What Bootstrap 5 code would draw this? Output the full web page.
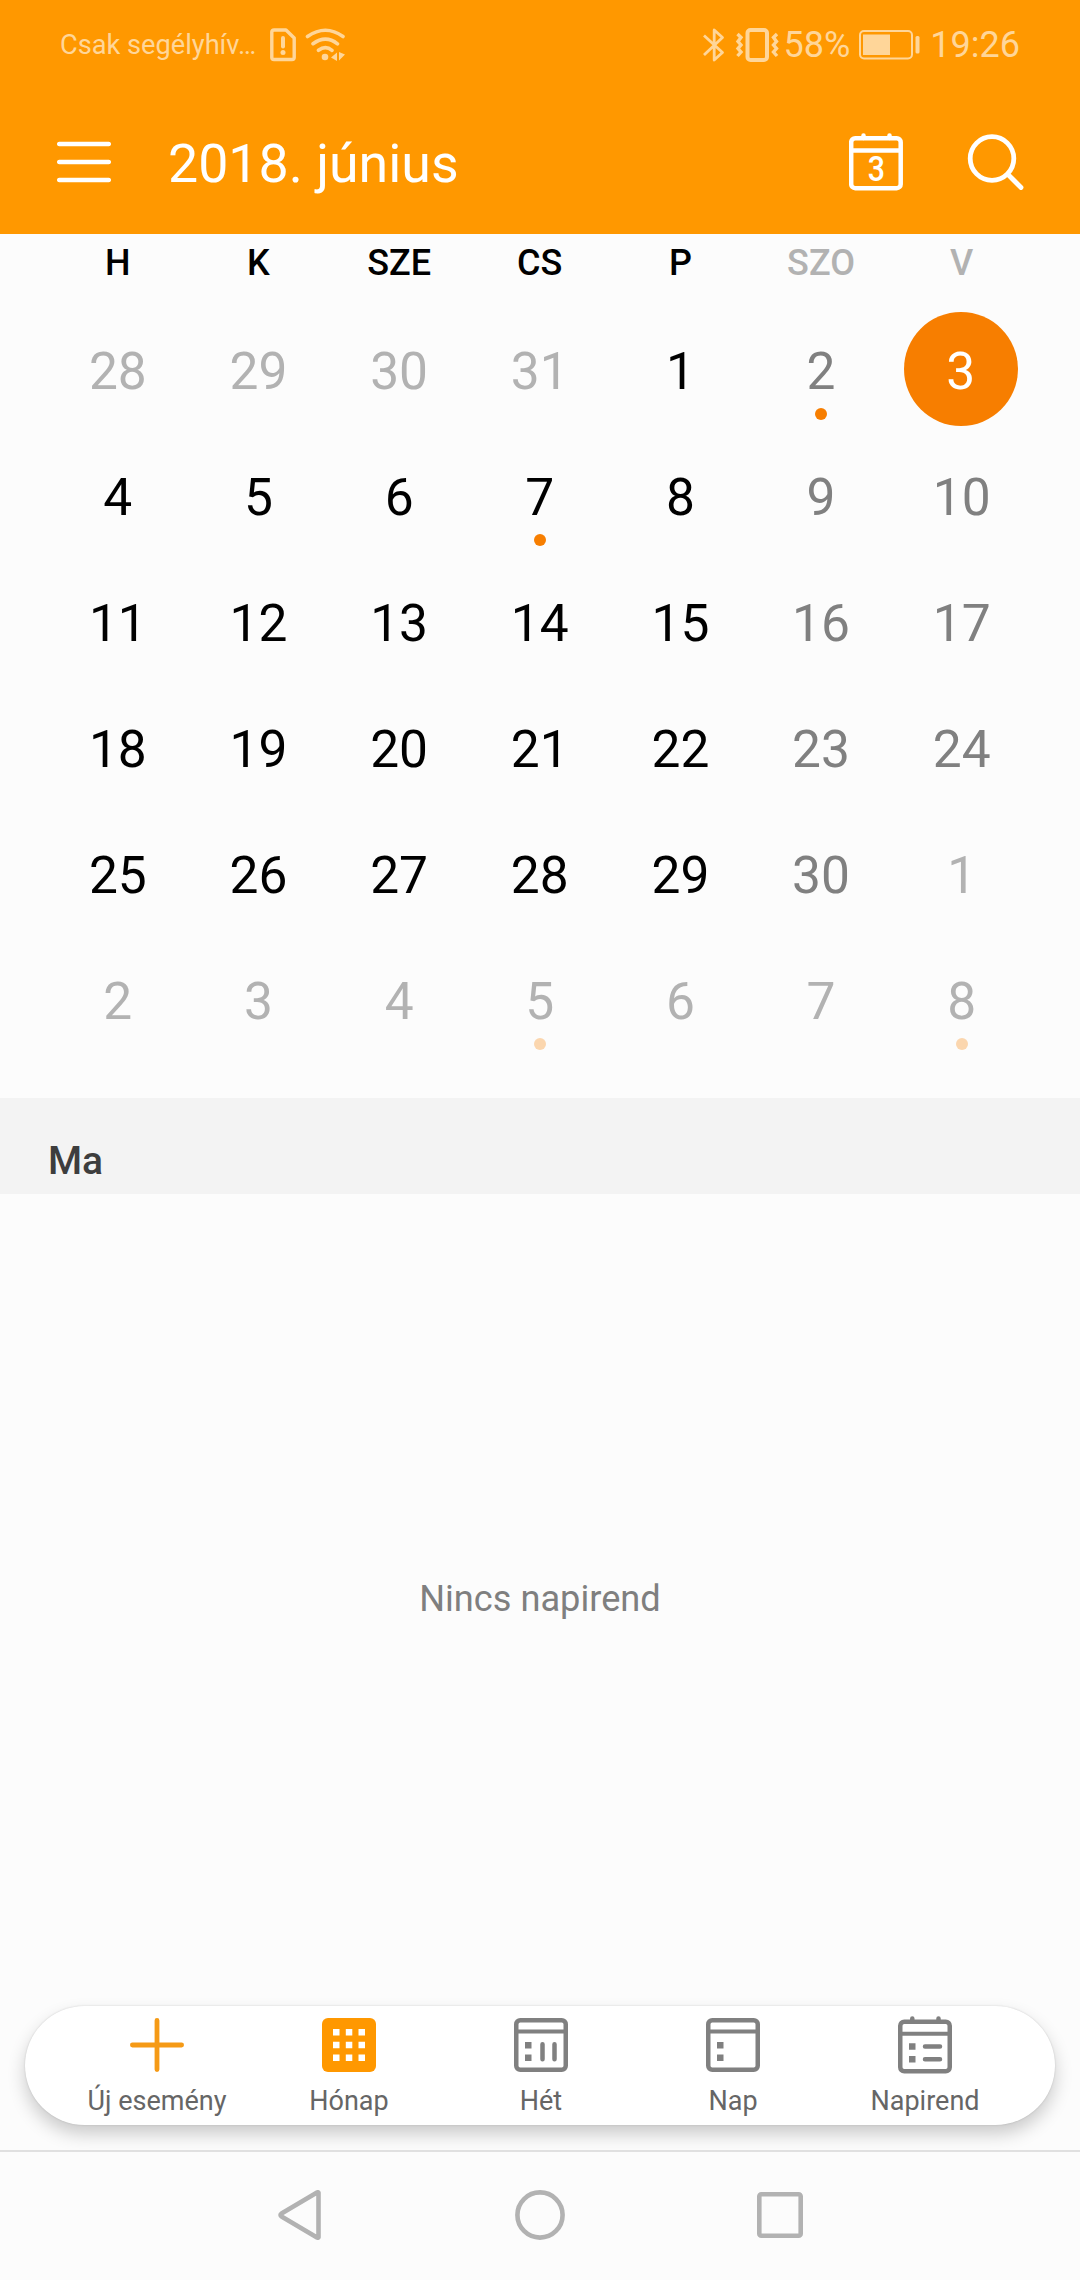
<!DOCTYPE html>
<html lang="hu">
<head>
<meta charset="utf-8">
<meta name="viewport" content="width=device-width, initial-scale=1">
<title>Naptár</title>
<link rel="stylesheet" href="https://cdn.jsdelivr.net/npm/bootstrap@5.3.0/dist/css/bootstrap.min.css">
<style>
  body { font-family: Roboto, "Noto Sans", sans-serif; background: #fcfcfc; color: #000; width: 1080px; height: 2280px; overflow: hidden; }
  svg { display: block; flex: none; }
  .top-area { background: #ff9800; height: 234px; }
  .status-bar { height: 90px; padding: 0 60px; color: #ffd699; line-height: 92px; white-space: nowrap; }
  .carrier { font-size: 27.2px; width: 210px; }
  .status-num { font-size: 36px; line-height: 94px; }
  .vibrate-icon { margin-left: 9px; }
  .battery-pct { margin-left: 5px; }
  .battery-icon { margin-left: 9px; }
  .clock { margin-left: 10px; }
  .app-bar { height: 144px; padding: 0 56px 0 57px; color: #fff; }
  .app-title { font-size: 53.7px; line-height: 60px; font-weight: 400; margin: 4px 0 0 57px; }
  .search-icon { margin-left: 64px; }
  .cal { padding: 0 48px 0 47.500px; height: 864px; }
  .weekdays { height: 72px; font-size: 36px; line-height: 59px; font-weight: 500; }
  .day { height: 126px; font-size: 51.5px; line-height: 131px; }
  .weekend { color: #808080; }
  .faded { color: #b2b2b2; }
  .today-disc { width: 114px; height: 114px; margin: 6px 0 0 12.500px; line-height: 119px; background: #f77e00; color: #fff; }
  .event-dot { width: 12px; height: 12px; left: calc(50% - 6px); top: 102px; background: #f77e00; }
  .faded .event-dot { background: #fbd6ae; }
  .section-head { height: 96px; background: #f3f3f3; padding: 33px 0 0 48px; font-size: 39px; line-height: 61px; font-weight: 500; color: #3d3d3d; }
  .agenda { height: 812px; font-size: 36.2px; color: #7f7f7f; padding-bottom: 2px; }
  .tab-bar { height: 119px; margin: 0 25px; padding: 12px 34px 0 36px; border-radius: 60px; background: #fff; box-shadow: 0 9px 18px rgba(0,0,0,.2), 0 0 2px rgba(0,0,0,.16); }
  .tab-item { font-size: 27px; line-height: 32px; color: #666; gap: 13px; }
  .nav-area { margin-top: 25px; height: 130px; border-top: 2px solid #e0e0e0; padding-bottom: 2px; }
  .home-icon { margin: 0 192px 0 193px; }
</style>
<script src="https://cdn.jsdelivr.net/npm/bootstrap@5.3.0/dist/js/bootstrap.bundle.min.js"></script>
</head>
<body>
<header class="top-area">
  <div class="status-bar d-flex align-items-center">
    <span class="carrier">Csak segélyhív…</span>
    <svg width="26" height="34" viewBox="0 0 26 34" fill="none" stroke="#ffd699" stroke-width="3.400"><path d="M4 2H16L24.200 10V29.500Q24.200 31.500 22 31.500H4Q1.800 31.500 1.800 29.500V4Q1.800 2 4 2Z" stroke-linejoin="round"/><path d="M13 10V18.500" stroke-width="4" stroke-linecap="round"/><circle cx="13" cy="24.600" r="2.500" fill="#ffd699" stroke="none"/></svg>
    <svg class="ms-2" width="42" height="34" viewBox="0 0 42 34" fill="none" stroke="#ffd699" stroke-width="3.600" stroke-linecap="round"><path d="M3.500 8.500Q21.500-4 39 8.500M9 15.800Q21.500 6.500 33.500 15.800M14.500 22.300Q21.500 17 28 22.300"/><circle cx="21" cy="29" r="3.300" fill="#ffd699" stroke="none"/><path d="M27 29.500L33 24.500V33ZM35 24L41 26.500L35 32.500Z" fill="#ffd699" stroke="none"/></svg>
    <div class="d-flex align-items-center ms-auto">
      <svg width="24" height="36" viewBox="0 0 24 36" fill="none" stroke="#ffd699" stroke-width="2.800" stroke-linejoin="round"><path d="M2 8.500L20.500 25.500L12.200 33V3L20.500 10.500L2 28"/></svg>
      <svg class="vibrate-icon" width="44" height="34" viewBox="0 0 44 34" fill="none" stroke="#ffd699"><rect x="12.500" y="2" width="19.500" height="30" rx="3" stroke-width="4"/><path d="M2.500 6L6 9.500L3 13.500L6 17L3 20.500L6 24L2.500 28M42 6L38.500 9.500L41.500 13.500L38.500 17L41.500 20.500L38.500 24L42 28" stroke-width="3.400"/></svg>
      <span class="status-num battery-pct">58%</span>
      <svg class="battery-icon" width="61" height="30" viewBox="0 0 61 30"><rect x="1" y="1" width="52" height="27.500" rx="4" fill="none" stroke="#ffd699" stroke-width="2"/><rect x="4" y="4.500" width="27" height="20.500" fill="#ffd699"/><rect x="56.500" y="6" width="4" height="17.500" rx="1.500" fill="#ffd699"/></svg>
      <span class="status-num clock">19:26</span>
    </div>
  </div>
  <div class="app-bar d-flex align-items-center">
    <svg width="54" height="42" viewBox="0 0 54 42" stroke="#fff" stroke-width="4.500" stroke-linecap="round"><path d="M2.200 3H51.800M2.200 21H51.800M2.200 39H51.800"/></svg>
    <h1 class="app-title mb-0">2018. június</h1>
    <svg class="ms-auto" width="54" height="58" viewBox="0 0 54 58" fill="none" stroke="#fff" stroke-width="4.500"><rect x="2.200" y="5.200" width="49.500" height="50" rx="4"/><path d="M2 17.500H52"/><path d="M14.500 5V2.500M40.500 5V2.500" stroke-linecap="round"/><text transform="translate(27.500 48) scale(.88 1)" text-anchor="middle" font-size="34.500" font-weight="500" fill="#fff" stroke="none">3</text></svg>
    <svg class="search-icon" width="57" height="58" viewBox="0 0 57 58" fill="none" stroke="#fff" stroke-width="4.800" stroke-linecap="round"><circle cx="25" cy="25.500" r="21.800"/><path d="M41 41.500L54 54.500"/></svg>
  </div>
</header>
<main>
  <section class="cal text-center">
    <div class="weekdays row g-0"><div class="col">H</div><div class="col">K</div><div class="col">SZE</div><div class="col">CS</div><div class="col">P</div><div class="col faded">SZO</div><div class="col faded">V</div></div>
    <div class="row g-0"><div class="col day faded">28</div><div class="col day faded">29</div><div class="col day faded">30</div><div class="col day faded">31</div><div class="col day">1</div><div class="col day weekend position-relative">2<span class="event-dot position-absolute rounded-circle"></span></div><div class="col day"><div class="today-disc rounded-circle">3</div></div></div>
    <div class="row g-0"><div class="col day">4</div><div class="col day">5</div><div class="col day">6</div><div class="col day position-relative">7<span class="event-dot position-absolute rounded-circle"></span></div><div class="col day">8</div><div class="col day weekend">9</div><div class="col day weekend">10</div></div>
    <div class="row g-0"><div class="col day">11</div><div class="col day">12</div><div class="col day">13</div><div class="col day">14</div><div class="col day">15</div><div class="col day weekend">16</div><div class="col day weekend">17</div></div>
    <div class="row g-0"><div class="col day">18</div><div class="col day">19</div><div class="col day">20</div><div class="col day">21</div><div class="col day">22</div><div class="col day weekend">23</div><div class="col day weekend">24</div></div>
    <div class="row g-0"><div class="col day">25</div><div class="col day">26</div><div class="col day">27</div><div class="col day">28</div><div class="col day">29</div><div class="col day weekend">30</div><div class="col day faded">1</div></div>
    <div class="row g-0"><div class="col day faded">2</div><div class="col day faded">3</div><div class="col day faded">4</div><div class="col day faded position-relative">5<span class="event-dot position-absolute rounded-circle"></span></div><div class="col day faded">6</div><div class="col day faded">7</div><div class="col day faded position-relative">8<span class="event-dot position-absolute rounded-circle"></span></div></div>
  </section>
  <h2 class="section-head mb-0">Ma</h2>
  <div class="agenda d-flex align-items-center justify-content-center">Nincs napirend</div>
</main>
<nav class="tab-bar d-flex">
  <div class="tab-item col d-flex flex-column align-items-center">
    <svg width="54" height="54" viewBox="0 0 54 54" stroke="#f59a16" stroke-width="4.800" stroke-linecap="round"><path d="M27 2.400V51.600M2.400 27H51.600"/></svg>Új esemény</div>
  <div class="tab-item col d-flex flex-column align-items-center">
    <svg width="54" height="54" viewBox="0 0 54 54"><rect width="54" height="54" rx="6" fill="#ff9800"/><path d="M11 11h6.500v6.500H11zM23.800 11h6.500v6.500h-6.500zM36.500 11H43v6.500h-6.500zM11 23.800h6.500v6.500H11zM23.800 23.800h6.500v6.500h-6.500zM36.500 23.800H43v6.500h-6.500zM11 36.500h6.500V43H11zM23.800 36.500h6.500V43h-6.500zM36.500 36.500H43V43h-6.500z" fill="#fff"/></svg>Hónap</div>
  <div class="tab-item col d-flex flex-column align-items-center">
    <svg width="54" height="54" viewBox="0 0 54 54" fill="none" stroke="#808080" stroke-width="4.500"><rect x="2.250" y="2.250" width="49.500" height="49.500" rx="4"/><path d="M2 13.500H52" stroke-width="4"/><path d="M28.500 26.300V41.200M40.500 26.300V41.200" stroke-linecap="round"/><path d="M11 24h6.500v6.500H11zM11 36.500h6.500V43H11z" fill="#808080" stroke="none"/></svg>Hét</div>
  <div class="tab-item col d-flex flex-column align-items-center">
    <svg width="54" height="54" viewBox="0 0 54 54" fill="none" stroke="#808080" stroke-width="4.500"><rect x="2.250" y="2.250" width="49.500" height="49.500" rx="4"/><path d="M2 13.500H52" stroke-width="4"/><path d="M11 24h6.500v6.500H11zM11 36.500h6.500V43H11z" fill="#808080" stroke="none"/></svg>Nap</div>
  <div class="tab-item col d-flex flex-column align-items-center">
    <svg width="54" height="54" viewBox="0 0 54 54" overflow="visible" fill="none" stroke="#808080" stroke-width="4.500"><rect x="2.250" y="3.750" width="49.500" height="49.500" rx="4"/><path d="M2 15.800H52" stroke-width="4"/><path d="M14.300 3V.5M40.500 3V.5M27 28.500H42M27 41.200H42" stroke-linecap="round"/><path d="M11 25.300h6.500v6.500H11zM11 38h6.500v6.500H11z" fill="#808080" stroke="none"/></svg>Napirend</div>
</nav>
<footer class="nav-area d-flex align-items-center justify-content-center">
  <svg width="44" height="50" viewBox="0 0 44 50" fill="none" stroke="#b2b2b2" stroke-width="4.600" stroke-linejoin="round"><path d="M40.500 2.800V47.200Q40 48 39 47.500L3.500 26.500Q1.500 25 3.500 23.500L39 2.500Q40 2 40.500 2.800Z"/></svg>
  <svg class="home-icon" width="50" height="50" viewBox="0 0 50 50" fill="none" stroke="#b2b2b2" stroke-width="4.600"><circle cx="25" cy="25" r="22.600"/></svg>
  <svg width="46" height="46" viewBox="0 0 46 46" fill="none" stroke="#b2b2b2" stroke-width="4.600"><rect x="2.300" y="2.300" width="41.400" height="41.400" rx="2"/></svg>
</footer>
</body>
</html>
